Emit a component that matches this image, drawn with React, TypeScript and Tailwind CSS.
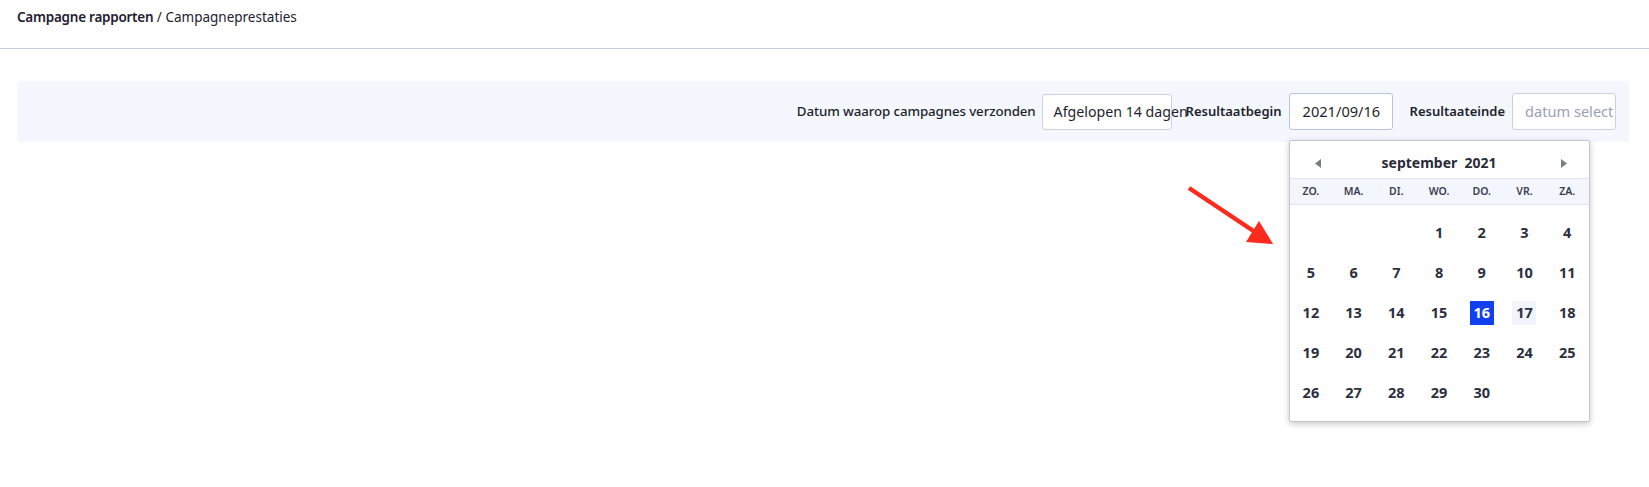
import React from "react";

const days: (number | null)[] = [null, null, null, 1, 2, 3, 4];
for (let d = 5; d <= 30; d++) days.push(d);

export default function App() {
  return (
    <div className="relative w-[1649px] h-[487px] bg-white overflow-hidden" style={{ fontFamily: '"Noto Sans", sans-serif' }}>
      <div className="h-[49px] border-b border-[#c9cde0] px-[17px] pt-[7px]">
        <div className="text-[13.5px] leading-[20px] text-[#1e2030]">
          <span className="font-semibold tracking-[-0.25px]">Campagne rapporten</span>
          <span> / Campagneprestaties</span>
        </div>
      </div>

      <div className="mt-[32px] ml-[17px] mr-[20px] h-[61px] bg-[#f4f7fd] rounded-[3px] flex items-center justify-end pr-[13px]">
        <span className="text-[13.3px] font-medium text-[#1d1f2c] mr-[6px] whitespace-nowrap tracking-[-0.1px]">Datum waarop campagnes verzonden</span>
        <div className="relative w-[130px] h-[36px] bg-white border border-[#cdd2e1] rounded-[3px] flex items-center pl-[11px]">
          <span className="text-[14.2px] text-[#1d1f2c] whitespace-nowrap">Afgelopen 14 dagen</span>
        </div>
        <span className="ml-[14px] text-[13px] font-semibold text-[#1d1f2c] mr-[7px] whitespace-nowrap">Resultaatbegin</span>
        <div className="relative w-[104px] h-[37px] bg-white border border-[#b9c3e0] rounded-[3px] flex items-center pl-[13px]">
          <span className="text-[14.6px] text-[#1d1f2c] whitespace-nowrap">2021/09/16</span>
          <div className="absolute left-[-1px] top-[46px] w-[301px] h-[282px] bg-white border border-[#c3c6cf] rounded-[2px] shadow-[0_2px_6px_rgba(0,0,0,0.22)] z-10">
            <div className="relative h-[37px] flex items-center justify-center pt-[6px]">
              <svg className="absolute left-[25px] top-[18px]" width="6" height="9" viewBox="0 0 6 9"><path d="M6 0 L0 4.5 L6 9 Z" fill="#7b7d84" /></svg>
              <span className="text-[14px] font-bold text-[#2a2c38]">september&nbsp;&nbsp;2021</span>
              <svg className="absolute right-[22px] top-[18px]" width="6" height="9" viewBox="0 0 6 9"><path d="M0 0 L6 4.5 L0 9 Z" fill="#7b7d84" /></svg>
            </div>
            <div className="h-[27px] bg-[#f3f6fc] border-y border-[#dfe4f1] grid grid-cols-7 items-center">
              {["ZO.", "MA.", "DI.", "WO.", "DO.", "VR.", "ZA."].map((n) => (
                <span key={n} className="text-center text-[10.5px] font-semibold text-[#3b3f52]">{n}</span>
              ))}
            </div>
            <div className="grid grid-cols-7 pt-[8px]">
              {days.map((d, i) => (
                <div key={i} className="h-[40px] flex items-center justify-center">
                  {d !== null && (
                    <span
                      className={
                        "w-[24px] h-[24px] flex items-center justify-center text-[14.5px] font-bold " +
                        (d === 16 ? "bg-[#1140f0] text-white" : d === 17 ? "bg-[#f1f4fc] text-[#2c2f3e]" : "text-[#2c2f3e]")
                      }
                    >
                      {d}
                    </span>
                  )}
                </div>
              ))}
            </div>
          </div>
        </div>
        <span className="ml-[17px] text-[13px] font-semibold text-[#1d1f2c] mr-[7px] whitespace-nowrap">Resultaateinde</span>
        <div className="w-[104px] h-[37px] bg-white border border-[#cdd2e1] rounded-[3px] flex items-center pl-[12px] overflow-hidden">
          <span className="text-[14.6px] text-[#9aa0b4] whitespace-nowrap">datum select</span>
        </div>
      </div>

      <svg className="absolute left-0 top-0 pointer-events-none" width="1649" height="487">
        <line x1="1189" y1="188" x2="1258" y2="234" stroke="#fd2a1e" strokeWidth="4.5" strokeLinecap="butt" />
        <path d="M1273 244 L1246 242 L1259 221 Z" fill="#fd2a1e" />
      </svg>
    </div>
  );
}
